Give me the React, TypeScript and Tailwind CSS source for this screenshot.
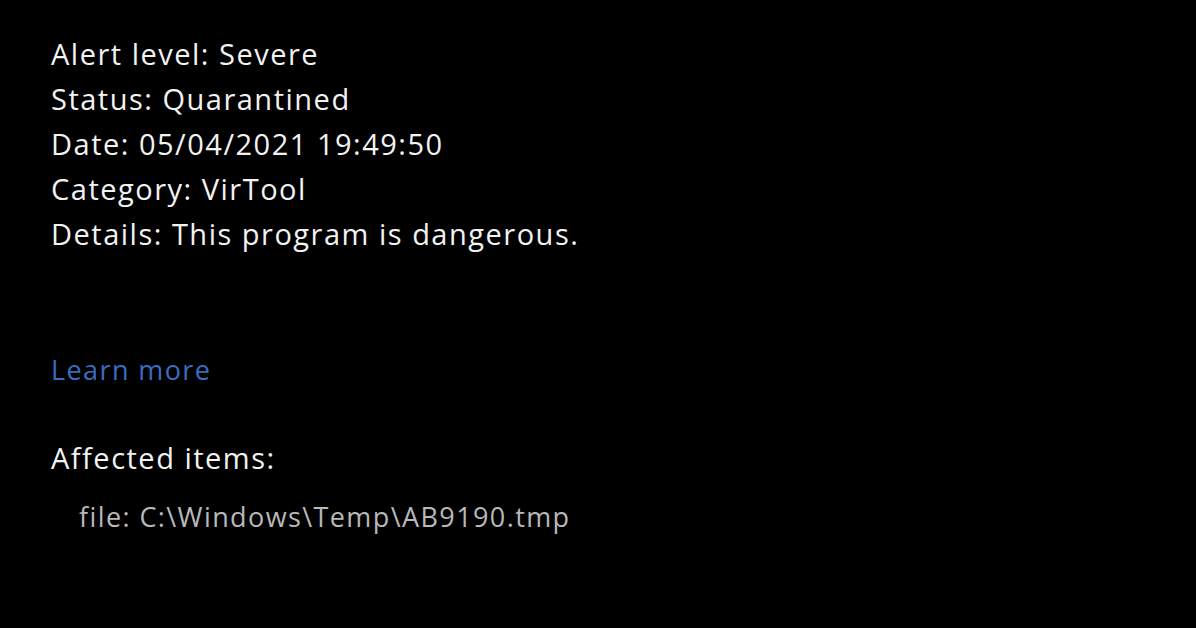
export default function App() {
  const rows = [
    'Alert level: Severe',
    'Status: Quarantined',
    'Date: 05/04/2021 19:49:50',
    'Category: VirTool',
    'Details: This program is dangerous.',
  ]

  return (
    <div className="w-[1196px] h-[628px] bg-black overflow-hidden pl-[51px] pt-[31px] font-['Open_Sans',sans-serif] text-[#f2f2f2]">
      {/* Detail rows */}
      <div className="text-[29px] leading-[45px] tracking-[1.5px]">
        {rows.map((row) => (
          <div key={row}>{row}</div>
        ))}
      </div>

      <a className="block mt-[91px] text-[27px] leading-[45px] tracking-[1.4px] text-[#3a6cc0]">Learn more</a>

      <div className="mt-[43px] text-[29px] leading-[45px] tracking-[1.5px]">Affected items:</div>
      <div className="pl-[28px] mt-[17px] text-[27px] leading-[40px] tracking-[1.4px] text-[#b8b8b8]">
        file: C:\Windows\Temp\AB9190.tmp
      </div>
    </div>
  )
}
